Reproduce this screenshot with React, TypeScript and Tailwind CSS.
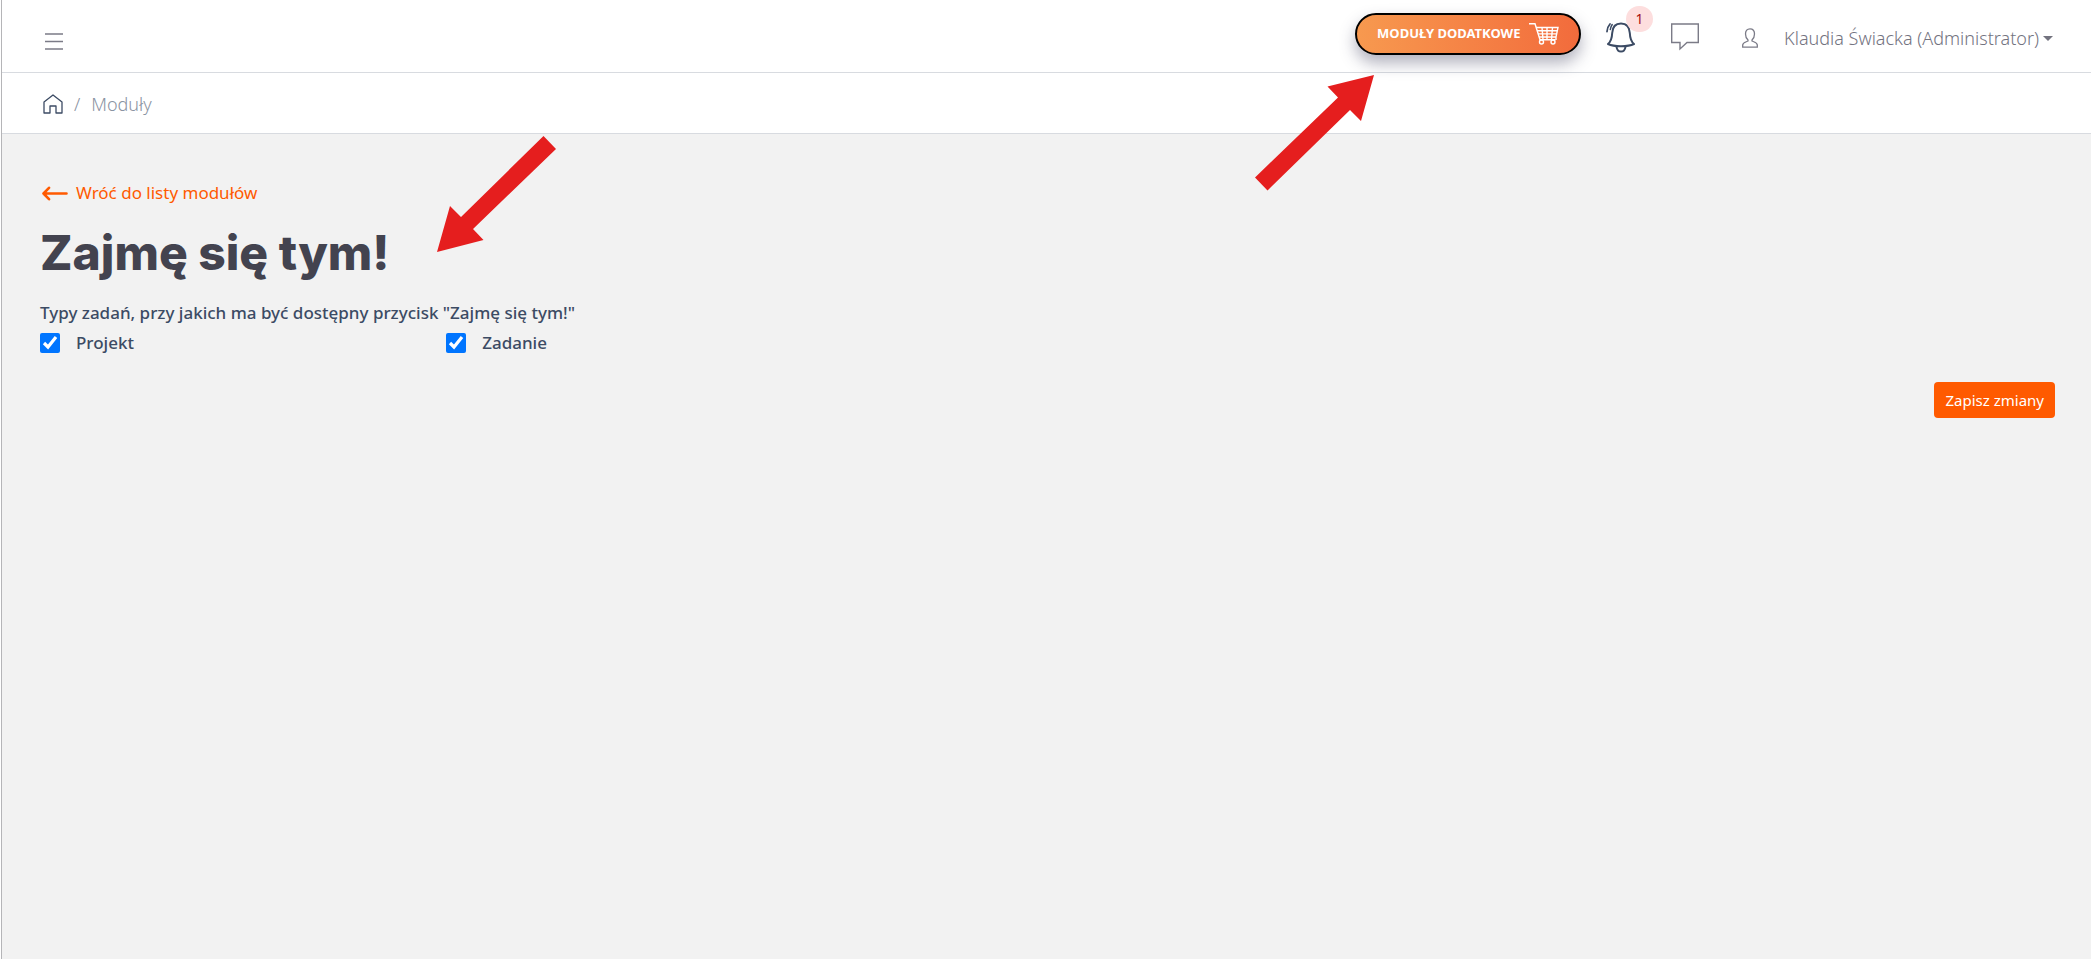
import type { ReactElement } from "react";

const taskTypes = [
  { id: "project", name: "Projekt" },
  { id: "task", name: "Zadanie" },
];

function MenuIcon(): ReactElement {
  return (
    <svg width="18" height="17" viewBox="0 0 18 17" fill="none" stroke="#7b7b87" strokeWidth="1.7">
      <path d="M0 1h18M0 8.5h18M0 16h18" />
    </svg>
  );
}

function HomeIcon(): ReactElement {
  return (
    <svg width="20" height="20" viewBox="0 0 20 20" fill="none" stroke="#3c4b64" strokeWidth="1.3" strokeLinejoin="round">
      <path d="M1 19V8L10 .9 19 8v11h-6v-7H7v7z" />
    </svg>
  );
}

function CartIcon(): ReactElement {
  return (
    <svg width="30" height="22" viewBox="0 0 30 22" fill="none" stroke="white" strokeWidth="1.4">
      <path d="M0 .8h6l5 16h15.500" />
      <path d="M7 4.500h22l-2 9.500v3M8 7.700h20.500M9 10.900h18.500M10 14h17M13 4.500l1 12M18 4.500v12M23.500 4.500l-1 12" />
      <circle cx="12.500" cy="19" r="2" />
      <circle cx="24" cy="19" r="2" />
    </svg>
  );
}

function BellIcon(): ReactElement {
  return (
    <svg width="29" height="31" viewBox="0 0 29 31" fill="none" stroke="#3c4b64" strokeWidth="2" strokeLinecap="round" strokeLinejoin="round">
      <path d="M2 22c3-2.500 4-6 4.200-11C6.500 5 9.500 1.500 15 1.500S23.500 5 23.800 11c.2 5 1.200 8.500 4.200 11-6 3-20 3-26 0z" />
      <path d="M10.500 24.800c.5 3 2 4.700 4.500 4.700s4-1.700 4.500-4.700" />
      <path d="M1 9.500c.2-3 1.200-5.500 3-7.500" strokeWidth="1.800" />
      <path d="M4.300 7.500c.3-2 .9-3.600 1.900-5" strokeWidth="1.500" />
    </svg>
  );
}

function CommentIcon(): ReactElement {
  return (
    <svg width="28" height="28" viewBox="0 0 28 28" fill="none" stroke="#7b7b87" strokeWidth="1.4">
      <path d="M.7 1h26.600v18.500H16L9 26v-6.500H.7z" />
    </svg>
  );
}

function UserIcon(): ReactElement {
  return (
    <svg width="16" height="20" viewBox="0 0 16 20" fill="none" stroke="#7b7b87" strokeWidth="1.3">
      <path d="M6 12C4.300 10.500 3.500 8.500 3.500 6 3.500 2.800 5.200.8 8 .8s4.500 2 4.500 5.200c0 2.500-.8 4.500-2.500 6v1c1.500 1 5.300 1.200 5.300 4v2.200H.7V17c0-2.800 3.800-3 5.300-4z" />
    </svg>
  );
}

function BackIcon(): ReactElement {
  return (
    <svg width="26" height="15" viewBox="0 0 26 15" fill="none" stroke="#ff5a00" strokeWidth="2.600" strokeLinecap="round" strokeLinejoin="round">
      <path d="M24.500 7.500H1.500M7 1.800L1.500 7.500 7 13.200" />
    </svg>
  );
}

function Header(): ReactElement {
  return (
    <header className="flex h-[73px] items-center justify-between border-b border-[#d8dbe0] bg-white pr-[38px] pl-[43px]">
      <button type="button" aria-label="Menu" className="pt-2.5">
        <MenuIcon />
      </button>
      <div className="flex items-center">
        <button
          type="button"
          className="mb-1 flex h-[42px] w-[226px] items-center justify-between rounded-full border-2 border-black bg-linear-to-r from-[#f7994f] to-[#f26b3c] px-5 text-[13px] font-bold text-white shadow-[0_8px_16px_rgba(60,60,90,0.4)]"
        >
          MODUŁY DODATKOWE
          <CartIcon />
        </button>
        <button type="button" aria-label="Powiadomienia" className="relative ml-[25px] pt-0.5">
          <BellIcon />
          <span className="absolute -top-3.5 left-5 flex h-[26px] w-[27px] items-center justify-center rounded-full bg-[#fddede] text-sm text-[#a51111]">
            1
          </span>
        </button>
        <button type="button" aria-label="Wiadomości" className="ml-9 pt-0.5">
          <CommentIcon />
        </button>
        <button type="button" className="ml-[43px] flex items-center pt-1 text-lg font-light text-[#73737f]">
          <UserIcon />
          <span className="ml-[26px]">Klaudia Świacka (Administrator)</span>
          <svg width="10" height="5" viewBox="0 0 10 5" className="ml-1">
            <path d="M0 0h10L5 5z" fill="#73737f" />
          </svg>
        </button>
      </div>
    </header>
  );
}

function Breadcrumb(): ReactElement {
  return (
    <nav className="flex h-[61px] items-center border-b border-[#d8dbe0] bg-white pt-0.5 pl-[41px] text-lg font-light text-[#8a93a2]">
      <a href="#" aria-label="Strona główna">
        <HomeIcon />
      </a>
      <span className="mx-[11px]">/</span>
      <span>Moduły</span>
    </nav>
  );
}

export default function App(): ReactElement {
  return (
    <div className="relative ml-px min-h-screen border-l border-[#b5b5b8] bg-[#f2f2f2] font-['Noto_Sans',sans-serif] text-[#3c4b64]">
      <Header />
      <Breadcrumb />

      <main className="pt-11 pr-9 pl-[38px]">
        <a href="#" className="flex items-center gap-2 pl-0.5 text-[17px] leading-[30px] text-[#ff5a00]">
          <BackIcon />
          Wróć do listy modułów
        </a>
        <h1 className="mt-4 font-[Inter,sans-serif] text-5xl leading-[58px] font-extrabold text-[#43434f]">Zajmę się tym!</h1>

        <form className="mt-4">
          <fieldset>
            <legend className="text-[17px] leading-[30px] font-medium">
              Typy zadań, przy jakich ma być dostępny przycisk "Zajmę się tym!"
            </legend>
            <div className="grid grid-cols-5 gap-x-4">
              {taskTypes.map((type) => (
                <label key={type.id} className="flex items-center gap-4 text-[17px] leading-[30px] font-medium">
                  <input type="checkbox" defaultChecked className="h-5 w-5 accent-[#0075ff]" />
                  {type.name}
                </label>
              ))}
            </div>
          </fieldset>
          <div className="mt-6 flex justify-end">
            <button type="button" className="h-9 rounded bg-[#ff5a00] px-[11px] text-[15px] text-white">
              Zapisz zmiany
            </button>
          </div>
        </form>
      </main>

      {/* Pointer arrows over the page */}
      <svg className="pointer-events-none absolute top-[136px] left-[435px]" width="120" height="117" fill="#e51e1e">
        <path d="M106.500 0L119 13 36 93l10.500 11L0 116 13 70l11 11z" />
      </svg>
      <svg className="pointer-events-none absolute top-[75px] right-[716px]" width="120" height="117" fill="#e51e1e">
        <path d="M12.500 115.500L0 102.500 83 22.500 72.500 11.500 119 0 106 46 95 35z" />
      </svg>
    </div>
  );
}
